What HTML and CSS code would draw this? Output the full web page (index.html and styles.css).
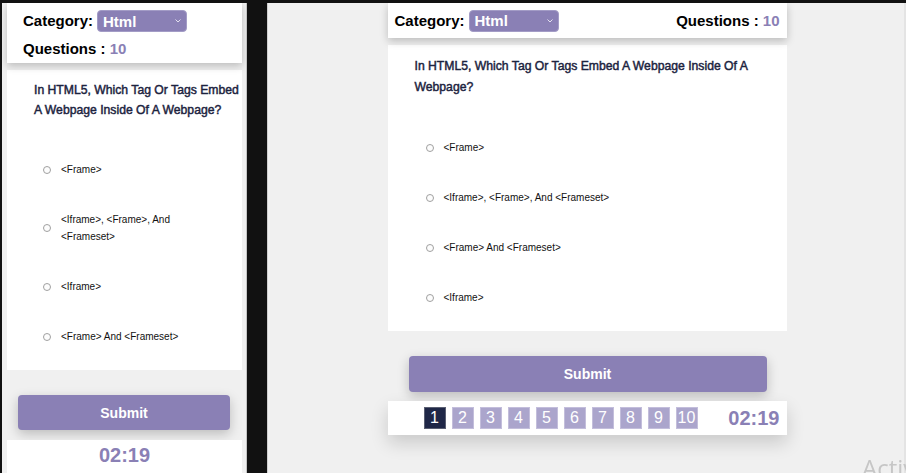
FILE: index.html
```html
<!DOCTYPE html>
<html lang="en">
<head>
<meta charset="utf-8">
<title>Quiz</title>
<link rel="stylesheet" href="styles.css">
</head>
<body>
<div class="screen">
  <section class="pane pane-narrow">
    <div class="quiz">
      <header class="quiz-head">
        <div class="cat">
          <span class="label">Category:</span>
          <div class="select"><span>Html</span><svg class="chev" width="6" height="4" viewBox="0 0 6 4"><path d="M0.5 0.5 L3 3 L5.5 0.5" fill="none" stroke="#e4e1ef" stroke-width="1"/></svg></div>
        </div>
        <div class="count">Questions : <span class="num">10</span></div>
      </header>
      <main class="card">
        <p class="question">In HTML5, Which Tag Or Tags Embed A Webpage Inside Of A Webpage?</p>
        <ul class="options">
          <li><span class="radio"></span><span class="opt">&lt;Frame&gt;</span></li>
          <li><span class="radio"></span><span class="opt">&lt;Iframe&gt;, &lt;Frame&gt;, And &lt;Frameset&gt;</span></li>
          <li><span class="radio"></span><span class="opt">&lt;Iframe&gt;</span></li>
          <li><span class="radio"></span><span class="opt">&lt;Frame&gt; And &lt;Frameset&gt;</span></li>
        </ul>
      </main>
      <button class="submit">Submit</button>
      <footer class="bar">
        <div class="timer">02:19</div>
      </footer>
    </div>
  </section>

  <section class="pane pane-wide">
    <div class="quiz">
      <header class="quiz-head">
        <div class="cat">
          <span class="label">Category:</span>
          <div class="select"><span>Html</span><svg class="chev" width="6" height="4" viewBox="0 0 6 4"><path d="M0.5 0.5 L3 3 L5.5 0.5" fill="none" stroke="#e4e1ef" stroke-width="1"/></svg></div>
        </div>
        <div class="count">Questions : <span class="num">10</span></div>
      </header>
      <main class="card">
        <p class="question">In HTML5, Which Tag Or Tags Embed A Webpage Inside Of A Webpage?</p>
        <ul class="options">
          <li><span class="radio"></span><span class="opt">&lt;Frame&gt;</span></li>
          <li><span class="radio"></span><span class="opt">&lt;Iframe&gt;, &lt;Frame&gt;, And &lt;Frameset&gt;</span></li>
          <li><span class="radio"></span><span class="opt">&lt;Frame&gt; And &lt;Frameset&gt;</span></li>
          <li><span class="radio"></span><span class="opt">&lt;Iframe&gt;</span></li>
        </ul>
      </main>
      <button class="submit">Submit</button>
      <footer class="bar">
        <div class="pages">
          <span class="page active">1</span><span class="page">2</span><span class="page">3</span><span class="page">4</span><span class="page">5</span><span class="page">6</span><span class="page">7</span><span class="page">8</span><span class="page">9</span><span class="page">10</span>
        </div>
        <div class="timer">02:19</div>
      </footer>
    </div>
  </section>
</div>
<div class="watermark">Activate Windows</div>
</body>
</html>
```

FILE: styles.css
```css
* { box-sizing: border-box; }

html, body {
  margin: 0;
  height: 100%;
  overflow: hidden;
}

body {
  background: #111111;
  font-family: "Liberation Sans", Arial, sans-serif;
  color: #000;
}

.screen {
  display: flex;
  gap: 20px;
  padding: 3px 0 0 2px;
  height: 100%;
}

.pane {
  background: #f0f0f0;
  height: 100%;
  overflow: hidden;
}

.pane-narrow {
  width: 245px;
  flex: none;
  padding: 0 4px 0 5px;
  border-right: 1px solid #c4c4c4;
}

.pane-wide {
  flex: 1;
  padding-left: 2px;
  border-left: 1px solid #cfcfcf;
  border-right: 2px solid #e4e4e4;
}

.pane-wide .quiz {
  width: 399px;
  margin: 0 auto;
}

/* header */
.quiz-head {
  background: #fff;
  box-shadow: 0 3px 8px rgba(0, 0, 0, 0.22);
  position: relative;
  z-index: 1;
}

.pane-narrow .quiz-head {
  display: flex;
  flex-direction: column;
  gap: 6px;
  padding: 7px 16px 3px;
}

.pane-wide .quiz-head {
  display: flex;
  align-items: center;
  justify-content: space-between;
  height: 35px;
  padding: 0 7px;
}

.cat {
  display: flex;
  align-items: center;
  gap: 4px;
}

.label, .count {
  font-size: 15px;
  font-weight: bold;
  line-height: 22px;
}

.select {
  width: 90px;
  height: 22px;
  background: #8a80b5;
  border: 1px solid #a39cc6;
  border-radius: 4px;
  color: #fff;
  font-size: 15px;
  font-weight: bold;
  display: flex;
  align-items: center;
  justify-content: space-between;
  padding: 0 5px 0 5px;
}

.chev { display: block; }

.num { color: #8a80b5; }

/* card */
.card {
  background: #fff;
  margin-top: 7px;
  padding: 11px 0 8px 27px;
}

.question {
  margin: 0;
  font-size: 12.2px;
  font-weight: normal;
  -webkit-text-stroke: 0.45px #1c2340;
  color: #1c2340;
  line-height: 21px;
}

.pane-narrow .question { line-height: 19.5px; }

.options {
  list-style: none;
  margin: 25px 0 0 9px;
  padding: 0 24px 0 0;
}

.pane-wide .options { margin-left: 11px; }

.options li {
  display: flex;
  align-items: center;
  gap: 10px;
  padding: 16px 0 17px;
  font-size: 10px;
  line-height: 17px;
  color: #111;
}

.radio {
  flex: none;
  width: 8px;
  height: 8px;
  border: 1px solid #a0a0a0;
  border-radius: 50%;
  background: #fdfdfd;
}

/* submit */
.submit {
  display: block;
  width: calc(100% - 23px);
  margin: 25px 12px 0 11px;
  height: 35px;
  border: none;
  border-radius: 4px;
  background: #8a80b5;
  color: #fff;
  font-family: inherit;
  font-size: 14px;
  font-weight: bold;
  box-shadow: 0 4px 12px rgba(0, 0, 0, 0.22);
}

.pane-wide .submit {
  width: calc(100% - 41px);
  margin: 25px 20px 0 21px;
  height: 36px;
}

/* bottom bar */
.bar {
  background: #fff;
  margin-top: 10px;
}

.pane-wide .bar {
  margin-top: 9px;
  height: 34px;
  display: flex;
  align-items: center;
  justify-content: space-between;
  padding: 0 7px 0 36px;
  box-shadow: 0 8px 18px rgba(0, 0, 0, 0.16);
}

.pane-narrow .bar {
  display: flex;
  flex-direction: column;
  align-items: center;
  padding-top: 4px;
  min-height: 60px;
}

.timer {
  font-size: 20px;
  font-weight: bold;
  color: #8a80b5;
  line-height: 23px;
}

.pages {
  display: flex;
  gap: 6px;
}

.page {
  width: 22px;
  height: 22px;
  background: #aba5cc;
  border: 1px solid #c3bedb;
  color: #fff;
  font-size: 16px;
  line-height: 20px;
  text-align: center;
}

.page.active {
  background: #1f2747;
  border-color: #5a5f72;
}

/* OS overlay */
.watermark {
  position: fixed;
  left: 862px;
  top: 451px;
  font-family: "Open Sans", "Noto Sans", sans-serif;
  font-size: 24px;
  color: #c6c6c6;
  white-space: nowrap;
}
```
